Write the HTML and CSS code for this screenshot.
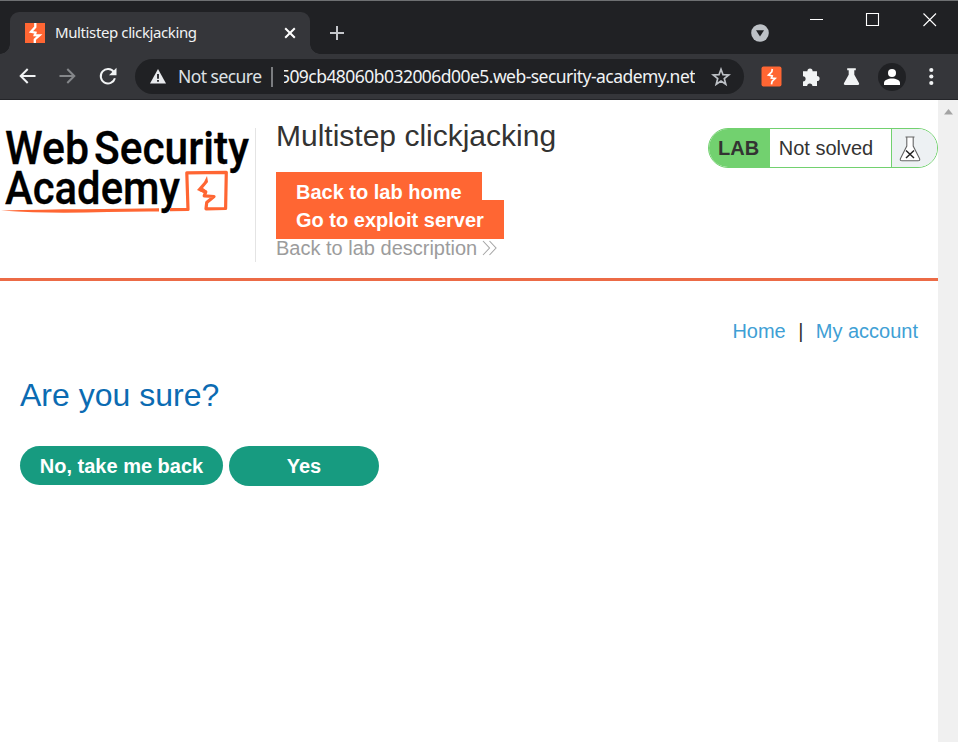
FILE: index.html
```html
<!DOCTYPE html>
<html lang="en">
<head>
<meta charset="utf-8">
<title>Multistep clickjacking</title>
<link rel="stylesheet" href="styles.css">
</head>
<body>
<div class="titlebar">
  <div class="tab">
    <svg class="favicon" width="20" height="20" viewBox="0 0 20 20"><path fill="#ff6633" d="M0 0h20v20H0z"/><path fill="none" stroke="#fff" stroke-width="2.300" d="M10.300 0v4L6 8.800l4.500.8-.8 2.600 4.800.1-4.700 4.200V20"/></svg>
    <span class="tab-title">Multistep clickjacking</span>
    <svg class="tab-close" width="12" height="12" viewBox="0 0 12 12"><path d="M1.200 1.200l9.600 9.600M10.800 1.200l-9.600 9.600" stroke="#fff" stroke-width="2" fill="none"/></svg>
  </div>
  <svg class="new-tab" width="16" height="16" viewBox="0 0 16 16"><path d="M8 1v14M1 8h14" stroke="#c4c7cb" stroke-width="2" fill="none"/></svg>
  <svg class="tab-search" width="18" height="18" viewBox="0 0 18 18"><circle cx="9" cy="9" r="8.800" fill="#bdc1c6"/><path d="M5 6.300h8L9 12.600z" fill="#202124"/></svg>
  <svg class="window-controls" width="130" height="16" viewBox="0 0 130 16"><path d="M2 7.500h13M58.500 1.500h12v12h-12zM115.500 1.500l12.500 12.500M128 1.500L115.500 14" stroke="#fff" stroke-width="1.100" fill="none"/></svg>
</div>
<div class="toolbar">
  <svg class="nav-icons" width="100" height="20" viewBox="0 0 100 20" fill="none" stroke-width="2"><path stroke="#f1f3f4" d="M17.500 9H2.500M9.700 2L2.700 9l7 7"/><path stroke="#85878a" d="M41.500 9H56M49.300 2l7 7-7 7"/><path stroke="#f1f3f4" d="M95.900 5.200A7.200 7.200 0 1 0 96.900 11.200"/><path fill="#f1f3f4" d="M98.500 .7v7.500h-7.500z"/></svg>
  <div class="omnibox">
    <svg class="warning" width="16" height="15" viewBox="0 0 16 15"><path fill="#e8eaed" d="M8 0l8 14.500H0z"/><path fill="#202124" d="M7.100 5h1.800v4.800H7.100zM7.100 11h1.800v1.800H7.100z"/></svg>
    <span class="security">Not secure</span>
    <span class="divider"></span>
    <span class="url"><span class="url-text">509cb48060b032006d00e5.web-security-academy.net</span></span>
    <svg class="star" width="20" height="20" viewBox="0 0 20 20"><path d="M10 2.300l2 5.400 5.800.3-4.500 3.600 1.500 5.600-4.800-3.200-4.800 3.200 1.500-5.600L2.200 8 8 7.700z" fill="none" stroke="#bdc1c6" stroke-width="1.700"/></svg>
  </div>
  <svg class="extensions" width="180" height="30" viewBox="0 0 180 30">
    <rect x="1.500" y="4.500" width="20" height="20" rx="2" fill="#ff6633"/><path fill="none" stroke="#fff" stroke-width="1.700" d="M12.300 7l-.5 2.800-3.300 3.300 3.700.8-.8 2.200 3.700.3-3 3-.6 3"/>
    <path fill="#f1f3f4" d="M43 9.200h4.400a2.600 2.600 0 0 1 5.200 0H57v4.700a2.600 2.600 0 0 1 0 5.200V24h-4.600a2.600 2.600 0 0 0-5.200 0H43v-4.600a2.600 2.600 0 0 0 0-5.200z"/>
    <path fill="#f1f3f4" d="M87.200 6.300h8.600v2h-1.500v4.400l4.800 8.600q.6 1.700-1.200 1.700H85.100q-1.800 0-1.200-1.700l4.800-8.600V8.300h-1.500z"/>
    <circle cx="132" cy="15" r="14" fill="#202124"/><circle cx="132" cy="11" r="4" fill="#fff"/><path fill="#fff" d="M124 23v-2c0-3 4-4.500 8-4.500s8 1.500 8 4.500v2z"/>
    <g fill="#f1f3f4"><circle cx="171.300" cy="8" r="2.100"/><circle cx="171.300" cy="14.500" r="2.100"/><circle cx="171.300" cy="21" r="2.100"/></g>
  </svg>
</div>
<div class="viewport">
  <div class="page">
    <header class="lab-header">
      <svg class="logo" width="255" height="134" viewBox="0 0 255 134">
        <g class="logo-text">
          <text x="5" y="35.500" textLength="84" lengthAdjust="spacingAndGlyphs">Web</text>
          <text x="94" y="35.500" textLength="155" lengthAdjust="spacingAndGlyphs">Security</text>
          <text x="5" y="76" textLength="175" lengthAdjust="spacingAndGlyphs">Academy</text>
        </g>
        <path fill="#ff6633" d="M1 82.500c55-1.700 112-1.200 158-2.300v3.400C112 83 60 87 1 82.500z"/>
        <path fill="none" stroke="#ff6633" stroke-width="3.200" stroke-linejoin="round" d="M170 81.600l18-.1-1.200-36.700 39.500-.5-.7 36.200-19.600.3.700-6.200 7.300-6.100-9.800-.6 1.600-4-5.800-2.400"/>
        <path fill="#ff6633" d="M207 48l1 6-5 6 4 3-1 3-9-4 7-8z"/>
      </svg>
      <div class="heading">
        <h1>Multistep clickjacking</h1>
        <div class="lab-links">
          <a class="lab-button">Back to lab home</a>
          <a class="lab-button">Go to exploit server</a>
          <a class="description">Back to lab description <svg width="16" height="16" viewBox="0 0 16 16"><path d="M1 1l6.500 7L1 15M7.500 1L14 8l-6.500 7" fill="none" stroke="#a5a5a5" stroke-width="1.100"/></svg></a>
        </div>
      </div>
      <div class="status">
        <span class="lab-label">LAB</span>
        <span class="lab-state">Not solved</span>
        <span class="lab-icon"><svg width="22" height="26" viewBox="0 0 22 26"><path d="M6.500 1h9M7.800 1v9L1.500 22.500q-.9 2.300 1.500 2.300h16q2.400 0 1.500-2.300L14.200 10V1" fill="#fff" stroke="#666" stroke-width="1.100"/><path d="M7 14.500l8 7.500M15 14.500L7 22" stroke="#222" stroke-width="1.500"/></svg></span>
      </div>
    </header>
    <main>
      <nav><a>Home</a><span>|</span><a>My account</a></nav>
      <h2>Are you sure?</h2>
      <div class="actions"><button class="no">No, take me back</button><button class="yes">Yes</button></div>
    </main>
  </div>
  <div class="scrollbar"><svg width="9" height="6" viewBox="0 0 9 6"><path d="M0 5.500L4.500 0 9 5.500z" fill="#a3a3a3"/></svg></div>
</div>
</body>
</html>
```
FILE: styles.css
```css
* { box-sizing: border-box; }
body { margin: 0; width: 958px; height: 742px; overflow: hidden; background: #fff; font: 20px/28px "Liberation Sans", Arial, sans-serif; color: #333332; }
svg { display: block; flex: none; }
.titlebar { height: 54px; background: #202124; border-top: 1px solid #6e7072; display: flex; padding-left: 10px; }
.tab { position: relative; width: 300px; height: 42px; margin-top: 11px; background: #35363a; border-radius: 9px 9px 0 0; display: flex; align-items: center; padding: 0 15px; font: 15px "Noto Sans", "Open Sans", sans-serif; color: #f1f3f4; }
.tab::before, .tab::after { content: ""; position: absolute; bottom: 0; width: 10px; height: 10px; }
.tab::before { right: 100%; background: radial-gradient(circle at 0 0, transparent 9.5px, #35363a 10px); }
.tab::after { left: 100%; background: radial-gradient(circle at 100% 0, transparent 9.5px, #35363a 10px); }
.tab-title { margin: -2px 0 0 10px; letter-spacing: -.39px; white-space: nowrap; }
.tab-close { margin-left: auto; margin-right: -1px; }
.new-tab { margin: 24px 0 0 19px; }
.tab-search { margin: 23px 0 0 406px; }
.window-controls { margin: 11px 0 0 39px; }
.toolbar { height: 46px; background: #35363a; border-bottom: 1px solid #242529; display: flex; align-items: center; padding-left: 18px; }
.omnibox { width: 609px; height: 35px; margin-left: 17px; border-radius: 18px; background: #202124; color: #f1f3f4; display: flex; align-items: center; padding-left: 15px; font: 17.5px/26px "Noto Sans", "Open Sans", sans-serif; white-space: nowrap; }
.security { width: 94px; margin: -1px 0 0 12px; letter-spacing: -.55px; color: #dee1e5; }
.divider { width: 2px; height: 20px; margin-left: -1px; background: #7b7d80; }
.url { width: 411px; margin: -1px 0 0 11px; overflow: hidden; display: flex; justify-content: flex-end; letter-spacing: -.54px; }
.url-text { flex: none; }
.star { margin-left: 16px; }
.extensions { margin-left: 16px; }
.viewport { height: 642px; display: flex; }
.page { width: 938px; }
.scrollbar { width: 20px; background: #f0f0f0; display: flex; justify-content: center; padding-top: 9px; }
.lab-header { height: 181px; border-bottom: 3px solid #ec6b46; padding-top: 28px; display: flex; align-items: flex-start; }
.logo { overflow: visible; }
.logo-text { font: 500 46px Roboto, sans-serif; fill: #000; stroke: #000; stroke-width: .3px; }
.heading { height: 134px; border-left: 1px solid #e4e4e4; padding-left: 20px; }
h1 { margin: -7px 0 0; font-size: 30px; line-height: 30px; font-weight: 400; white-space: nowrap; }
.lab-links { display: flex; flex-direction: column; align-items: flex-start; margin-top: 21px; }
.lab-button { height: 39px; padding: 0 20px; background: #ff6633; color: #fff; font-weight: 700; line-height: 40px; }
.lab-button + .lab-button { margin-top: -11px; }
.description { display: flex; align-items: center; gap: 5px; margin-top: -5px; color: #9c9c9c; }
.status { width: 230px; height: 40px; margin-left: auto; display: flex; border: 1px solid #72d16f; border-radius: 20px; overflow: hidden; line-height: 38px; }
.lab-label { width: 61px; padding-left: 9px; background: #72d16f; font-weight: 700; }
.lab-state { width: 122px; padding-left: 9px; }
.lab-icon { width: 46px; border-left: 1px solid #72d16f; background: #edf1f3; padding: 7px 0 0 7px; }
main { padding: 0 20px; }
nav { display: flex; justify-content: flex-end; padding-top: 36px; }
nav a { color: #409fd5; }
nav span { width: 30px; text-align: center; }
h2 { margin: 33px 0 0; font-size: 32px; line-height: 34px; font-weight: 400; color: #0b6bb2; }
.actions { display: flex; gap: 6px; margin-top: 34px; }
button { border: 0; border-radius: 20px; padding: 0; background: #179b80; color: #fff; font: 700 20px "Liberation Sans", Arial, sans-serif; }
.no { width: 203px; height: 39px; padding-top: 1px; }
.yes { width: 150px; height: 40px; }
```
